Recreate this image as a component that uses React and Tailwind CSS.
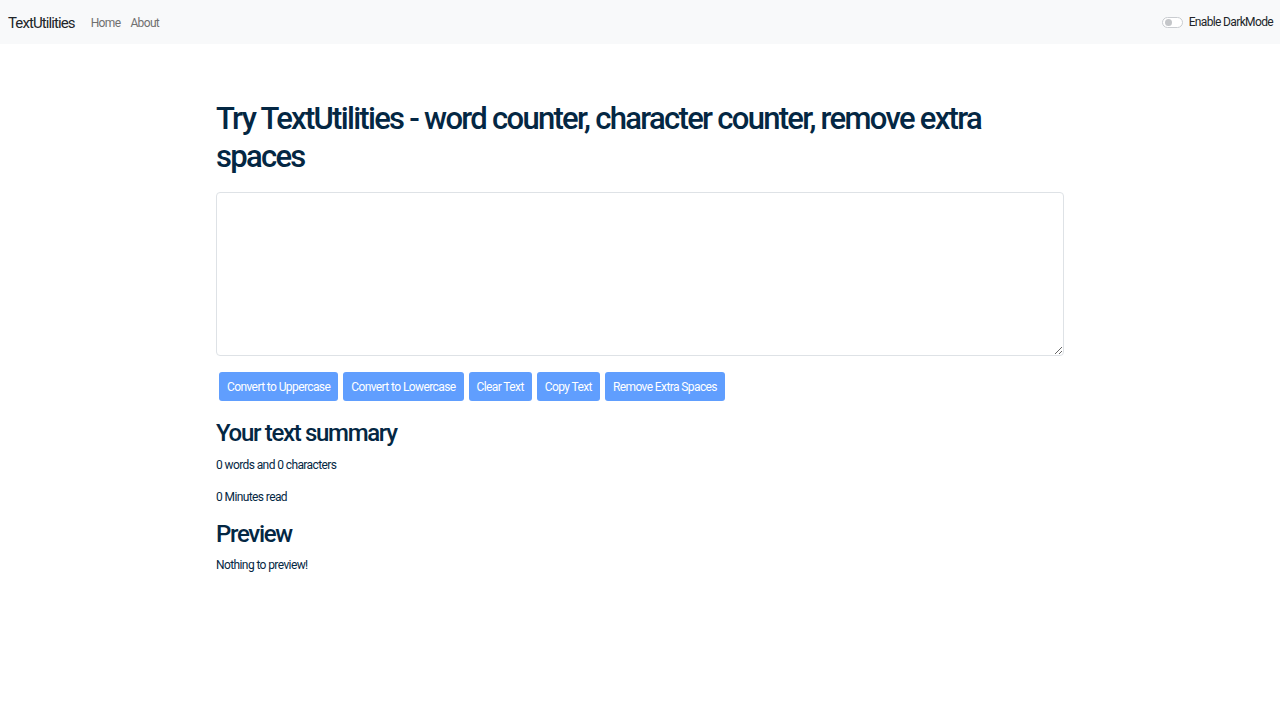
import React, { useState } from 'react';

const font = { fontFamily: 'Roboto, "Noto Sans", sans-serif' };

function Navbar() {
    return (
        <nav className="h-[44px] bg-[#f8f9fa] flex items-center justify-between pl-2 pr-[7px] tracking-[-0.04em]">
            <div className="flex items-center pt-[2px]">
                <span className="text-[15px] text-[#212529] tracking-[-0.06em] mr-[16px]">TextUtilities</span>
                <a className="text-[12px] text-[#707070] mr-[10px]">Home</a>
                <a className="text-[12px] text-[#707070]">About</a>
            </div>
            <div className="flex items-center">
                <span className="w-[21px] h-[11px] rounded-full border border-[#c9ccd0] bg-white flex items-center pl-[2px] mr-[6px]">
                    <span className="w-[7px] h-[7px] rounded-full bg-[#c4c6c9]" />
                </span>
                <span className="text-[12px] text-[#212529]">Enable DarkMode</span>
            </div>
        </nav>
    );
}

export default function App() {
    const [text, setText] = useState('');
    const buttons = ['Convert to Uppercase', 'Convert to Lowercase', 'Clear Text', 'Copy Text', 'Remove Extra Spaces'];

    return (
        <div className="min-h-[720px] bg-white" style={font}>
            <Navbar />
            <div className="w-[848px] mx-auto pt-[56px] text-[#042743]">
                <h1 className="text-[31px] leading-[38px] font-medium tracking-[-0.055em] mb-[16px]">
                    Try TextUtilities - word counter, character counter, remove extra spaces
                </h1>
                <textarea
                    value={text}
                    onChange={(e) => setText(e.target.value)}
                    className="block w-full h-[164px] border border-[#dee2e6] rounded-[4px] bg-white"
                />
                <div className="flex gap-[5px] mt-[16px] ml-[3px]">
                    {buttons.map((b) => (
                        <button
                            key={b}
                            disabled
                            className="h-[29px] px-[8px] bg-[#609efe] text-white text-[12px] tracking-[-0.05em] rounded-[3px]"
                        >
                            {b}
                        </button>
                    ))}
                </div>
                <div className="mt-[16px]">
                    <h2 className="text-[24px] leading-[32px] font-medium tracking-[-0.055em] mb-[6px]">Your text summary</h2>
                    <p className="text-[12px] leading-[20px] tracking-[-0.05em] mb-[12px]">0 words and 0 characters</p>
                    <p className="text-[12px] leading-[20px] tracking-[-0.05em] mb-[11px]">0 Minutes read</p>
                    <h2 className="text-[24px] leading-[32px] font-medium tracking-[-0.055em] mb-[5px]">Preview</h2>
                    <p className="text-[12px] leading-[20px] tracking-[-0.05em]">Nothing to preview!</p>
                </div>
            </div>
        </div>
    );
}
